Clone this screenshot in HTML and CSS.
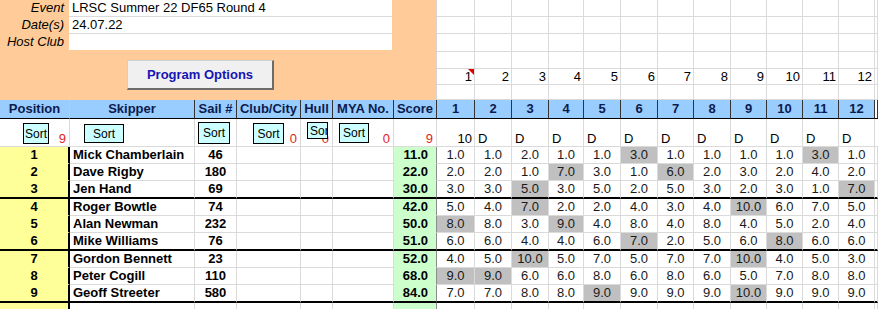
FILE: index.html
```html
<!DOCTYPE html>
<html lang="en">
<head>
  <meta charset="UTF-8" />
  <title>LRSC Summer 22 DF65 Round 4</title>
  <link rel="stylesheet" href="styles.css">
</head>
<body>
  <div class="top">
    <div class="info">
      <div class="field-row"><span class="label">Event</span><span class="field">LRSC Summer 22 DF65 Round 4</span></div>
      <div class="field-row"><span class="label">Date(s)</span><span class="field">24.07.22</span></div>
      <div class="field-row last"><span class="label">Host Club</span><span class="field"></span></div>
      <button class="options">Program Options</button>
    </div>
    <div class="race-top" id="raceTop"></div>
  </div>

  <div class="row head">
    <div class="first">Position</div>
    <div>Skipper</div>
    <div>Sail #</div>
    <div>Club/City</div>
    <div>Hull</div>
    <div>MYA No.</div>
    <div>Score</div>
    <div>1</div><div>2</div><div>3</div><div>4</div><div>5</div><div>6</div>
    <div>7</div><div>8</div><div>9</div><div>10</div><div>11</div><div>12</div>
    <div class="edge"></div>
  </div>

  <div class="row sorts">
    <div class="red"><button class="sort s-pos">Sort</button>9</div>
    <div><button class="sort s-skip">Sort</button></div>
    <div><button class="sort s-sail">Sort</button></div>
    <div class="red"><button class="sort s-club">Sort</button>0</div>
    <div class="red"><span>0</span><button class="sort s-hull">Sort</button></div>
    <div class="red"><button class="sort s-mya">Sort</button>0</div>
    <div class="red">9</div>
    <div class="right">10</div>
    <div>D</div><div>D</div><div>D</div><div>D</div><div>D</div><div>D</div>
    <div>D</div><div>D</div><div>D</div><div>D</div><div>D</div>
    <div></div>
  </div>

  <div id="results"></div>

  <script>
    const results = [
      [1, "Mick Chamberlain", 46, "11.0", "1 1 2 1 1 3x 1 1 1 1 3x 1"],
      [2, "Dave Rigby", 180, "22.0", "2 2 1 7x 3 1 6x 2 3 2 4 2"],
      [3, "Jen Hand", 69, "30.0", "3 3 5x 3 5 2 5 3 2 3 1 7x"],
      [4, "Roger Bowtle", 74, "42.0", "5 4 7x 2 2 4 3 4 10x 6 7 5"],
      [5, "Alan Newman", 232, "50.0", "8x 8 3 9x 4 8 4 8 4 5 2 4"],
      [6, "Mike Williams", 76, "51.0", "6 6 4 4 6 7x 2 5 6 8x 6 6"],
      [7, "Gordon Bennett", 23, "52.0", "4 5 10x 5 7 5 7 7 10x 4 5 3"],
      [8, "Peter Cogill", 110, "68.0", "9x 9x 6 6 8 6 8 6 5 7 8 8"],
      [9, "Geoff Streeter", 580, "84.0", "7 7 8 8 9x 9 9 9 10x 9 9 9"]
    ];

    // numbered cells above the race columns
    let topHtml = "";
    for (let r = 0; r < 6; r++) {
      let cells = "";
      for (let c = 1; c <= 13; c++) {
        if (r === 4 && c <= 12) cells += `<div class="num${c === 1 ? " note" : ""}">${c}</div>`;
        else cells += "<div></div>";
      }
      topHtml += `<div class="grid-row r${r}">${cells}</div>`;
    }
    document.getElementById("raceTop").innerHTML = topHtml;

    let rowsHtml = "";
    results.forEach((res, i) => {
      const races = res[4].split(" ").map(v => {
        const dropped = v.endsWith("x");
        const n = parseFloat(v).toFixed(1);
        return `<div class="race${dropped ? " drop" : ""}">${n}</div>`;
      }).join("");
      rowsHtml += `<div class="row data${i % 3 === 2 ? " end" : ""}">
        <div class="pos">${res[0]}</div>
        <div class="skipper">${res[1]}</div>
        <div class="sail">${res[2]}</div>
        <div></div><div></div><div></div>
        <div class="score">${res[3]}</div>
        ${races}
        <div></div>
      </div>`;
    });
    rowsHtml += `<div class="row data blank"><div class="pos"></div>${"<div></div>".repeat(5)}<div class="score"></div>${"<div></div>".repeat(13)}</div>`;
    document.getElementById("results").innerHTML = rowsHtml;
  </script>
</body>
</html>
```

FILE: styles.css
```css
* {
  box-sizing: border-box;
}

body {
  margin: 0;
  width: 878px;
  overflow: hidden;
  font-family: "Liberation Sans", Arial, sans-serif;
  font-size: 13px;
  color: #000;
  background: #fff;
}

/* top block: event details + numbered grid */
.top {
  display: flex;
  height: 100px;
}

.info {
  width: 437px;
  background: #ffcc99;
  border-right: 1px solid #d4d4d4;
}

.field-row {
  display: flex;
  height: 17px;
}

.field-row.last {
  height: 16px;
}

.label {
  width: 69px;
  padding-right: 5px;
  text-align: right;
  font-style: italic;
  line-height: 16px;
}

.field {
  width: 323px;
  padding-left: 3px;
  background: #fff;
  border-bottom: 1px solid #dadada;
  line-height: 16px;
}

.field-row.last .field {
  border-bottom: none;
}

.options {
  display: block;
  margin: 10px 0 0 127px;
  width: 147px;
  height: 30px;
  padding: 0;
  background: #f0f0f0;
  border: 1px solid #d0d0d0;
  border-right: 2px solid #6b6b6b;
  border-bottom: 2px solid #6b6b6b;
  font-family: "Liberation Sans", Arial, sans-serif;
  font-size: 13px;
  font-weight: bold;
  color: #1515b5;
}

.race-top {
  flex: 1;
}

.grid-row {
  display: grid;
  grid-template-columns: 38px 37px 37px 35px 37px 37px 36px 37px 36px 36px 36px 36px 3px;
  height: 17px;
}

.grid-row.r2 { height: 18px; }
.grid-row.r4 { height: 16px; }
.grid-row.r5 { height: 15px; }

.grid-row > div {
  border-right: 1px solid #dadada;
  border-bottom: 1px solid #dadada;
}

.num {
  text-align: right;
  padding-right: 2px;
  line-height: 15px;
}

.note {
  position: relative;
}

.note::after {
  content: "";
  position: absolute;
  top: 0;
  right: 0;
  border-top: 6px solid #e00000;
  border-left: 6px solid transparent;
}

/* results sheet */
.row {
  display: grid;
  grid-template-columns: 70px 125px 42px 64px 32px 61px 43px 38px 37px 37px 35px 37px 37px 36px 37px 36px 36px 36px 36px 3px;
}

.row > div {
  border-right: 1px solid #dadada;
  border-bottom: 1px solid #dadada;
  white-space: nowrap;
  overflow: hidden;
}

.head {
  height: 19px;
}

.head > div {
  background: #99ccff;
  border-right-color: #333;
  border-bottom-color: #000;
  text-align: center;
  font-weight: bold;
  color: #0c1b4d;
  line-height: 18px;
}

.head > .first {
  border-right-color: #c8c8c8;
}

.head > .edge {
  background: #fff;
}

.sorts {
  height: 28px;
}

.sorts > div {
  position: relative;
  display: flex;
  align-items: flex-end;
  padding-left: 3px;
  line-height: 15px;
}

.sorts > .red {
  justify-content: flex-end;
  padding: 0 3px 0 0;
  color: #e21d1d;
}

.sorts > .right {
  justify-content: flex-end;
  padding: 0 2px 0 0;
}

.sort {
  position: absolute;
  padding: 0;
  background: #ccffff;
  border: 1px solid #000;
  font-family: "Liberation Sans", Arial, sans-serif;
  font-size: 12px;
  color: #000;
  text-align: center;
}

.s-pos { left: 23px; top: 4px; width: 26px; height: 21px; }
.s-skip { left: 14px; top: 5px; width: 40px; height: 19px; }
.s-sail { left: 3px; top: 3px; width: 32px; height: 22px; }
.s-club { left: 16px; top: 4px; width: 31px; height: 21px; }
.s-mya { left: 6px; top: 4px; width: 30px; height: 20px; }

.s-hull {
  left: 6px;
  top: 3px;
  width: 21px;
  height: 17px;
  overflow: hidden;
  text-align: left;
  padding-left: 2px;
}

.data {
  height: 17px;
  line-height: 16px;
}

.data.end {
  height: 18px;
}

.data.end > div {
  border-bottom: 2px solid #000;
}

.data > .pos {
  background: #ffff99;
  border-right: 2px solid #000;
  border-bottom-color: #ffff99;
  text-align: center;
  font-weight: bold;
}

.skipper {
  padding-left: 3px;
  font-weight: bold;
}

.sail {
  text-align: center;
  font-weight: bold;
}

.data > .score {
  background: #ccffcc;
  border-right-color: #8c8c8c;
  border-bottom-color: #ccffcc;
  padding-right: 8px;
  text-align: right;
  font-weight: bold;
}

.data.end > .score {
  border-bottom-color: #000;
}

.race {
  text-align: center;
  color: #1a1a1a;
}

.race.drop {
  background: #c0c0c0;
}
```
